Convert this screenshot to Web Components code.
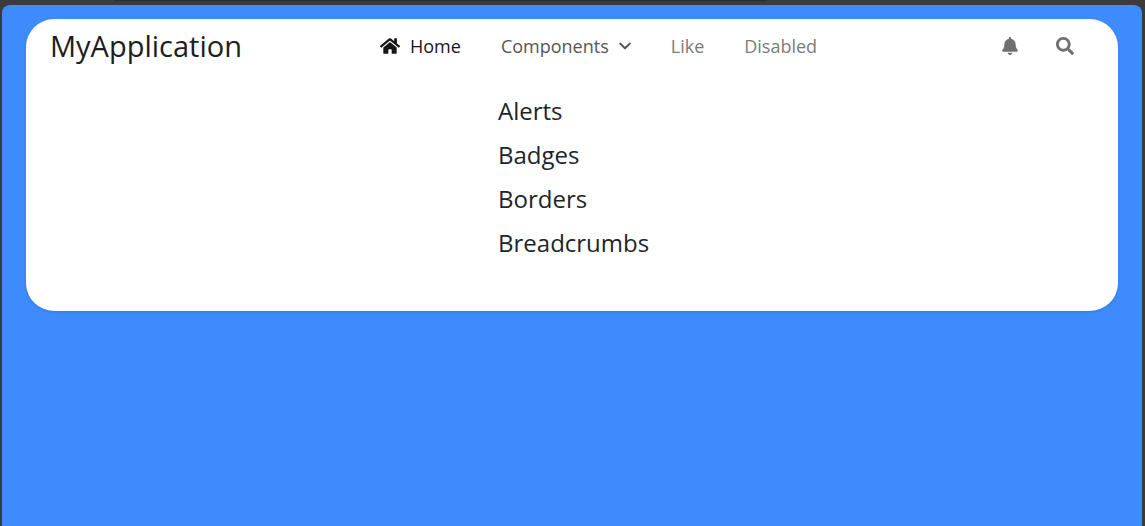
<!DOCTYPE html>
<html lang="en">
<head>
<meta charset="utf-8">
<title>MyApplication</title>
<style>
html, body { height: 100%; margin: 0; }
body { background: linear-gradient(90deg, transparent 10%, #292b2e 10% 67%, transparent 67%) 0 0 / 100% 1px no-repeat #3a3b3d; font-family: "Open Sans", "Noto Sans", sans-serif; color: #212529; }
</style>
</head>
<body>
<app-shell>
  <app-card>
    <app-brand slot="brand">MyApplication</app-brand>
    <nav-item slot="nav" icon="home" tone="active">Home</nav-item>
    <nav-item slot="nav" icon="chevron" tone="open">Components</nav-item>
    <nav-item slot="nav">Like</nav-item>
    <nav-item slot="nav">Disabled</nav-item>
    <icon-button slot="tools" icon="bell" label="Notifications"></icon-button>
    <icon-button slot="tools" icon="search" label="Search"></icon-button>
    <menu-link slot="menu">Alerts</menu-link>
    <menu-link slot="menu">Badges</menu-link>
    <menu-link slot="menu">Borders</menu-link>
    <menu-link slot="menu">Breadcrumbs</menu-link>
  </app-card>
</app-shell>
<script>
const icons = {
  home: '<svg width="20" height="18" viewBox="0 0 576 512" aria-hidden="true"><path fill="currentColor" d="M280.37 148.26L96 300.11V464a16 16 0 0 0 16 16l112.06-.29a16 16 0 0 0 15.92-16V368a16 16 0 0 1 16-16h64a16 16 0 0 1 16 16v95.64a16 16 0 0 0 16 16.05L464 480a16 16 0 0 0 16-16V300L295.67 148.26a12.19 12.19 0 0 0-15.3 0zM571.6 251.47L488 182.56V44.05a12 12 0 0 0-12-12h-56a12 12 0 0 0-12 12v72.61L318.47 43a48 48 0 0 0-61 0L4.34 251.47a12 12 0 0 0-1.6 16.9l25.5 31A12 12 0 0 0 45.15 301l235.22-193.74a12.19 12.19 0 0 1 15.3 0L530.9 301a12 12 0 0 0 16.9-1.6l25.5-31a12 12 0 0 0-1.7-16.93z"/></svg>',
  chevron: '<svg width="12" height="8" viewBox="0 0 12 8" aria-hidden="true"><path d="M1.2 1.6L6 6.2l4.8-4.6" fill="none" stroke="currentColor" stroke-width="2" stroke-linecap="round" stroke-linejoin="round"/></svg>',
  bell: '<svg width="16" height="18" viewBox="0 0 448 512" aria-hidden="true"><path fill="currentColor" d="M224 512c35.32 0 63.97-28.65 63.97-64H160.03c0 35.35 28.65 64 63.97 64zm215.39-149.71c-19.32-20.76-55.47-51.99-55.47-154.29 0-77.7-54.48-139.9-127.94-155.16V32c0-17.67-14.32-32-31.98-32s-31.98 14.33-31.98 32v20.84C118.56 68.1 64.08 130.3 64.08 208c0 102.3-36.15 133.53-55.47 154.29-6 6.45-8.66 14.16-8.61 21.71.11 16.4 12.98 32 32.1 32h383.8c19.12 0 32-15.6 32.1-32 .05-7.55-2.61-15.27-8.61-21.71z"/></svg>',
  search: '<svg width="18" height="18" viewBox="0 0 512 512" aria-hidden="true"><path fill="currentColor" d="M505 442.7L405.3 343c-4.5-4.5-10.6-7-17-7H372c27.6-35.3 44-79.7 44-128C416 93.1 322.9 0 208 0S0 93.1 0 208s93.1 208 208 208c48.3 0 92.7-16.4 128-44v16.3c0 6.4 2.5 12.5 7 17l99.7 99.7c9.4 9.4 24.6 9.4 33.9 0l28.3-28.3c9.4-9.4 9.4-24.6.1-34zM208 336c-70.7 0-128-57.2-128-128 0-70.7 57.2-128 128-128 70.7 0 128 57.2 128 128 0 70.7-57.2 128-128 128z"/></svg>'
};

function define(name, render) {
  customElements.define(name, class extends HTMLElement {
    constructor() { super(); this.attachShadow({ mode: 'open' }); }
    connectedCallback() { this.shadowRoot.innerHTML = render(this); }
  });
}

define('app-shell', () => `<style>
  :host { display: flex; box-sizing: border-box; min-height: 100%; padding: 5px 3px 0 2px; }
  main { flex: 1; background: #3d8bfd; border-radius: 8px 8px 0 0; padding: 14px 24px; }
</style><main><slot></slot></main>`);

define('app-card', () => `<style>
  :host { display: block; background: #fff; border-radius: 28px; box-shadow: 0 1px 3px rgba(0,0,0,.15); padding: 0 44px 46px 24px; }
  header { display: flex; align-items: center; height: 54px; }
  .brand { flex: 0 0 330px; }
  nav { display: flex; align-items: center; gap: 40px; }
  .tools { display: flex; align-items: center; gap: 38px; margin-left: auto; }
  .menu { display: flex; flex-direction: column; align-items: flex-start; padding: 16px 0 0 448px; }
</style>
<header><div class="brand"><slot name="brand"></slot></div>
<nav aria-label="Main"><slot name="nav"></slot></nav>
<div class="tools"><slot name="tools"></slot></div></header>
<div class="menu"><slot name="menu"></slot></div>`);

define('app-brand', () => `<style>
  :host { display: block; }
  a { color: #1c1e20; font-size: 29px; line-height: 40px; text-decoration: none; }
</style><a href="#"><slot></slot></a>`);

define('nav-item', el => {
  const icon = el.getAttribute('icon');
  return `<style>
  :host { display: block; }
  a { display: flex; align-items: center; gap: 10px; color: #7b7b7b; font-size: 18px; line-height: 28px; text-decoration: none; }
  :host([tone="active"]) a { color: #161616; }
  :host([tone="open"]) a { color: #555; }
</style><a href="#">${icon === 'home' ? icons.home : ''}<slot></slot>${icon === 'chevron' ? icons.chevron : ''}</a>`;
});

define('icon-button', el => `<style>
  :host { display: block; }
  button { display: flex; padding: 0; border: 0; background: none; color: #707070; cursor: pointer; }
</style><button type="button" aria-label="${el.getAttribute('label')}">${icons[el.getAttribute('icon')]}</button>`);

define('menu-link', () => `<style>
  :host { display: block; }
  a { display: block; color: #212529; font-size: 24px; line-height: 44px; text-decoration: none; }
</style><a href="#"><slot></slot></a>`);
</script>
</body>
</html>
